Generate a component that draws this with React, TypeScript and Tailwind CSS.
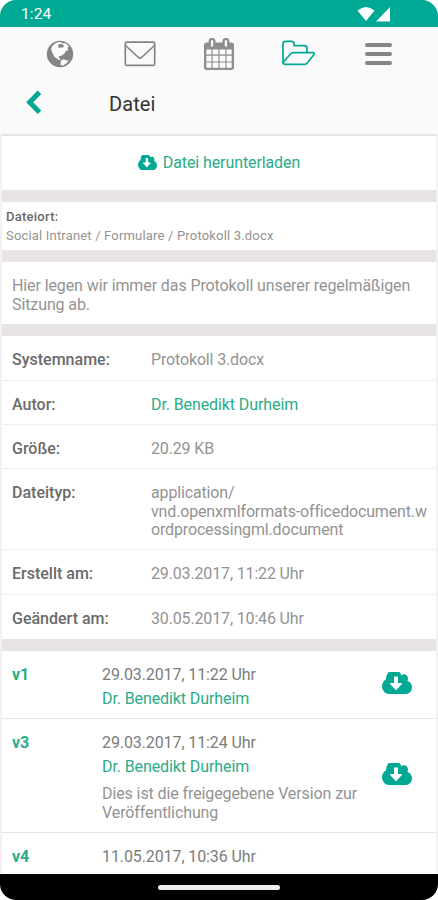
import React from "react";

const GREEN = "#00a993";

function CloudDownload({ className }: { className: string }) {
  return (
    <svg className={className} viewBox="0 256 1920 1280" preserveAspectRatio="none" fill={GREEN}>
      <path d="M1280 928q0-14-9-23t-23-9h-224v-352q0-13-9.5-22.5t-22.5-9.5h-192q-13 0-22.5 9.5t-9.5 22.5v352h-224q-13 0-22.5 9.5t-9.5 22.5q0 14 9 23l352 352q9 9 23 9t23-9l351-351q10-12 10-24zm640 224q0 159-112.5 271.5t-271.5 112.5h-1088q-185 0-316.5-131.5t-131.5-316.5q0-130 70-240t188-165q-2-30-2-43 0-212 150-362t362-150q156 0 285.5 87t188.5 231q71-62 166-62 106 0 181 75t75 181q0 76-41 138 130 31 213.5 135.5t83.5 238.5z" />
    </svg>
  );
}

function StatusBar() {
  return (
    <div className="flex h-[27px] shrink-0 items-center justify-between bg-[#00a993] pl-[21px] pr-[47px] text-white">
      <span className="pt-[2px] text-[15.5px] leading-none tracking-[0.1px]">1:24</span>
      <svg className="h-[16px] w-[34px]" viewBox="0 0 34 16" fill="currentColor">
        <path d="M0.5 4.5Q9 -2.5 17.5 4.5L9 15Z" />
        <path d="M33 1V15.5H19Z" />
      </svg>
    </div>
  );
}

function NavBar() {
  return (
    <nav className="flex h-[54px] shrink-0 items-center">
      <svg className="-mt-[1px] ml-[46px] h-[28px] w-[28px]" viewBox="0 0 28 28">
        <circle cx="14" cy="14" r="13.2" fill="#858585" />
        <path fill="#fafafa" d="M6 6.5Q8.5 3 12 2L15 2.2L17 3.5L19.5 3L23 6.5L21.5 8L22.5 10L20 11L18.5 13.5L16 15.5L13.5 16L12.5 17.5L14.5 19L13.5 20.2L11 18.5L8.5 17L6.5 13L5 9.5Z" />
        <path fill="#fafafa" d="M15 20.5L17.5 19.3L21 20.5L23 20L20.5 23.2L17.5 25.2L14.5 25.6Z" />
        <path fill="#858585" d="M12.5 4.5L15.5 3.8L18 5.5L17 7.8L14.8 7.2L13.5 8.2L12 6.5Z" />
      </svg>
      <svg className="ml-[50px] h-[26px] w-[32px]" viewBox="0 0 32 26" fill="none" stroke="#858585" strokeWidth="1.7" strokeLinejoin="round">
        <rect x="1.3" y="1.2" width="29.4" height="23.2" rx="1.5" />
        <path d="M1.5 4.5L14.5 16.5Q16 17.7 17.5 16.5L30.5 4.5" />
      </svg>
      <svg className="-mt-[1px] ml-[48px] h-[32px] w-[30px]" viewBox="64 0 1664 1792" preserveAspectRatio="none" fill="#8e8e8e">
        <path d="M192 1664h288v-288h-288v288zm352 0h320v-288h-320v288zm-352-352h288v-320h-288v320zm352 0h320v-320h-320v320zm-352-384h288v-288h-288v288zm736 736h320v-288h-320v288zm-384-736h320v-288h-320v288zm768 736h288v-288h-288v288zm-384-352h320v-320h-320v320zm-352-864v-288q0-13-9.5-22.5t-22.5-9.5h-64q-13 0-22.5 9.5t-9.5 22.5v288q0 13 9.5 22.5t22.5 9.5h64q13 0 22.5-9.5t9.5-22.5zm736 864h288v-320h-288v320zm-384-384h320v-288h-320v288zm384 0h288v-288h-288v288zm32-480v-288q0-13-9.5-22.5t-22.5-9.5h-64q-13 0-22.5 9.5t-9.5 22.5v288q0 13 9.5 22.5t22.5 9.5h64q13 0 22.5-9.5t9.5-22.5zm384-64v1280q0 52-38 90t-90 38h-1408q-52 0-90-38t-38-90v-1280q0-52 38-90t90-38h128v-96q0-66 47-113t113-47h64q66 0 113 47t47 113v96h384v-96q0-66 47-113t113-47h64q66 0 113 47t47 113v96h128q52 0 90 38t38 90z" />
      </svg>
      <svg className="-mt-[3px] ml-[47px] h-[26px] w-[35px]" viewBox="0 0 35 26" fill="none" stroke={GREEN} strokeWidth="1.7" strokeLinejoin="round">
        <path d="M2 22.5V4Q2 1.3 4.7 1.3H10.5Q13 1.3 13 3.7V5.7H23.5Q26 5.7 26 8.2V12.6" />
        <path d="M2 22.5Q2 24.4 4.5 24.4H23.5Q25.3 24.4 26.5 22.8L32.8 14.8Q34 12.8 31.8 12.6H12Q10.5 12.6 9.4 14L2.6 22Z" />
      </svg>
      <div className="-mt-[1px] ml-[49px] flex w-[27px] flex-col gap-[5px]">
        <span className="h-[4px] rounded-sm bg-[#858585]" />
        <span className="h-[4px] rounded-sm bg-[#858585]" />
        <span className="h-[4px] rounded-sm bg-[#858585]" />
      </div>
    </nav>
  );
}

const rows = [
  { label: "Systemname:", value: "Protokoll 3.docx", box: "h-[45px]" },
  { label: "Autor:", value: "Dr. Benedikt Durheim", box: "h-[44px]", link: true },
  { label: "Größe:", value: "20.29 KB", box: "h-[44px]" },
  { label: "Dateityp:", value: "application/\nvnd.openxmlformats-officedocument.w\nordprocessingml.document", box: "h-[81px]" },
  { label: "Erstellt am:", value: "29.03.2017, 11:22 Uhr", box: "h-[45px]" },
  { label: "Geändert am:", value: "30.05.2017, 10:46 Uhr", box: "h-[44px]" },
];

const versions = [
  { name: "v1", date: "29.03.2017, 11:22 Uhr", author: "Dr. Benedikt Durheim", box: "h-[68px]", note: "" },
  { name: "v3", date: "29.03.2017, 11:24 Uhr", author: "Dr. Benedikt Durheim", box: "h-[114px]", note: "Dies ist die freigegebene Version zur Veröffentlichung" },
  { name: "v4", date: "11.05.2017, 10:36 Uhr", author: "", box: "h-[41px]", note: "" },
];

export default function App() {
  return (
    <div className="flex h-[900px] w-[438px] flex-col overflow-hidden rounded-[16px] bg-[#fafafa] font-[Roboto,sans-serif] text-[16px] leading-[18.5px] tracking-[-0.1px] text-[#939393]">
      <StatusBar />
      <NavBar />
      <header className="flex h-[53px] shrink-0 items-center">
        <svg className="-mt-[10px] ml-[25px] h-[25px] w-[17px]" viewBox="0 0 17 25" fill="none" stroke={GREEN} strokeWidth="5">
          <path d="M14.5 2.3L4.7 12.3L14.5 22.3" />
        </svg>
        <h1 className="-mt-[7px] ml-[67px] text-[20px] leading-none tracking-[0.1px] text-[#333]">Datei</h1>
      </header>
      <main className="flex min-h-0 flex-1 flex-col gap-[12px] overflow-hidden border-x-2 border-[#f3f2f2] bg-[#e7e4e3] pt-[2px]">
        <section className="flex h-[54px] shrink-0 items-center justify-center gap-[6px] bg-white text-[#2aac87]">
          <CloudDownload className="-mt-[2px] h-[15px] w-[19px]" />
          <span>Datei herunterladen</span>
        </section>
        <section className="h-[48px] shrink-0 bg-white pl-[4px] pt-[5px] text-[13px] leading-[19px]">
          <div className="font-medium tracking-[0.25px] text-[#6a6a6a]">Dateiort:</div>
          <div className="tracking-[0.18px]">Social Intranet / Formulare / Protokoll 3.docx</div>
        </section>
        <section className="h-[62px] shrink-0 bg-white px-[10px] pt-[15px]">
          Hier legen wir immer das Protokoll unserer regelmäßigen Sitzung ab.
        </section>
        <section className="shrink-0 divide-y divide-[#eeeeee] bg-white">
          {rows.map((r) => (
            <div key={r.label} className={`flex pl-[10px] pt-[15px] ${r.box}`}>
              <div className="w-[139px] shrink-0 font-medium tracking-normal text-[#6a6a6a]">{r.label}</div>
              <div className={`min-w-0 flex-1 whitespace-pre-line ${r.link ? "text-[#2aac87]" : "tracking-[-0.15px]"}`}>{r.value}</div>
            </div>
          ))}
        </section>
        <section className="shrink-0 divide-y divide-[#e6e6e6] bg-white">
          {versions.map((v) => (
            <div key={v.name} className={`flex pl-[10px] pr-[24px] ${v.box}`}>
              <div className="w-[90px] shrink-0 pt-[15px] font-bold text-[#2aac87]">{v.name}</div>
              <div className="w-[270px] pt-[15px]">
                <div className="text-[#7c7c7c]">{v.date}</div>
                {v.author && <div className="mt-[5px] text-[#2aac87]">{v.author}</div>}
                {v.note && <p className="mt-[9px]">{v.note}</p>}
              </div>
              {v.author && (
                <div className="ml-auto flex shrink-0 items-center pb-[4px]">
                  <CloudDownload className="h-[22px] w-[30px]" />
                </div>
              )}
            </div>
          ))}
        </section>
      </main>
      <footer className="flex h-[26px] shrink-0 items-center justify-center bg-black">
        <span className="h-[5px] w-[122px] rounded-sm bg-[#eeeeee]" />
      </footer>
    </div>
  );
}
